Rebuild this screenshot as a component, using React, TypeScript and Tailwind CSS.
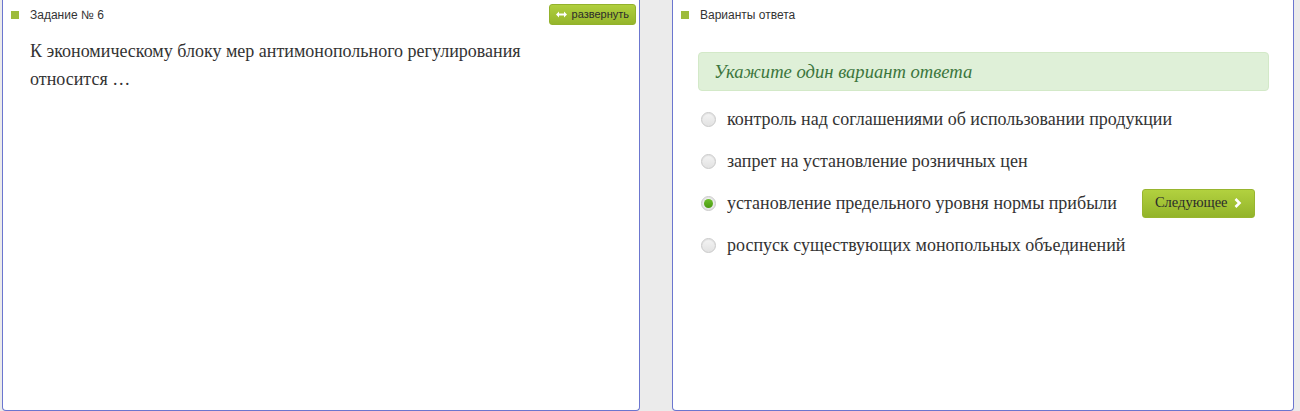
import React from 'react';

const options = [
    'контроль над соглашениями об использовании продукции',
    'запрет на установление розничных цен',
    'установление предельного уровня нормы прибыли',
    'роспуск существующих монопольных объединений',
];

const serif = '"Liberation Serif", "Times New Roman", serif';

function Radio({ checked }: { checked: boolean }) {
    return (
        <span className="flex h-[15px] w-[15px] shrink-0 items-center justify-center rounded-full border border-[#c9c9c9] bg-gradient-to-b from-[#f4f4f4] to-[#e2e2e2] shadow-[inset_0_1px_1px_rgba(0,0,0,0.08)]">
            {checked && <span className="h-[9px] w-[9px] rounded-full bg-gradient-to-b from-[#6cbf2a] to-[#4b9a12]" />}
        </span>
    );
}

function PanelHeader({ title }: { title: string }) {
    return (
        <div className="flex h-[24px] items-center gap-[11px] pl-[8px] pt-[5px]">
            <span className="h-[8px] w-[8px] bg-[#9dbb3c]" />
            <span className="text-[12px] leading-none text-[#333]">{title}</span>
        </div>
    );
}

export default function App() {
    return (
        <div
            className="flex h-[411px] w-[1300px] bg-[#ebebeb] pl-[2px]"
            style={{ fontFamily: '"Liberation Sans", Arial, sans-serif' }}
        >
            <section className="flex h-full w-[638px] flex-col rounded-b-[4px] border-x border-b border-[#6b76cf] bg-white">
                <div className="flex items-start justify-between">
                    <PanelHeader title="Задание № 6" />
                    <button className="mr-[3px] mt-[4px] flex h-[21px] items-center gap-[5px] rounded-[3px] border border-[#93b22c] bg-gradient-to-b from-[#b0cf3e] to-[#95b52b] px-[6px] text-[11px] text-[#2b2b2b]">
                        <svg width="11" height="7" viewBox="0 0 11 7" fill="#fff">
                            <path d="M0 3.5 L3 0.5 V2.5 H8 V0.5 L11 3.5 L8 6.5 V4.5 H3 V6.5 Z" />
                        </svg>
                        развернуть
                    </button>
                </div>
                <p className="ml-[27px] mt-[12px] w-[540px] text-[18px] leading-[28px] text-[#333]" style={{ fontFamily: serif }}>
                    К экономическому блоку мер антимонопольного регулирования относится …
                </p>
            </section>
            <div className="w-[32px]" />
            <section className="flex h-full w-[622px] flex-col rounded-b-[4px] border-x border-b border-[#6b76cf] bg-white">
                <PanelHeader title="Варианты ответа" />
                <div className="flex flex-col" style={{ fontFamily: serif }}>
                    <div className="ml-[25px] mr-[24px] mt-[28px] flex h-[39px] items-center rounded-[4px] border border-[#d3e9c8] bg-[#dff0d8] pl-[15px] text-[18.6px] italic text-[#3c763d]">
                        Укажите один вариант ответа
                    </div>
                    <div className="mt-[7px] flex flex-col">
                        {options.map((o, i) => (
                            <div key={i} className="flex h-[42px] items-center pl-[28px]">
                                <Radio checked={i === 2} />
                                <span className="ml-[11px] text-[18px] text-[#333]">{o}</span>
                                {i === 2 && (
                                    <button className="ml-[25px] flex h-[29px] items-center gap-[6px] rounded-[3px] border border-[#98b52f] bg-gradient-to-b from-[#b2d13f] to-[#93b42a] px-[12px] text-[14.5px] text-[#2b2b2b]">
                                        Следующее
                                        <svg width="8" height="10" viewBox="0 0 8 10">
                                            <path d="M1.5 1 L5.5 5 L1.5 9" stroke="#fff" strokeWidth="2.6" fill="none" />
                                        </svg>
                                    </button>
                                )}
                            </div>
                        ))}
                    </div>
                </div>
            </section>
        </div>
    );
}
